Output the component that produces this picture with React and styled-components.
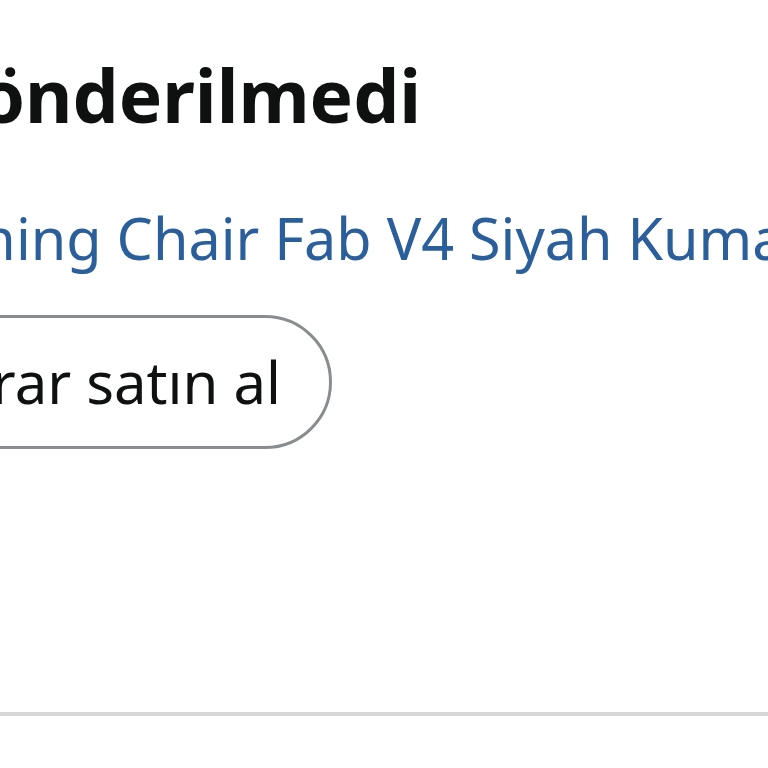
import React from "react";
import styled, { createGlobalStyle } from "styled-components";

const Global = createGlobalStyle`
  html, body { margin: 0; padding: 0; background: #ffffff; }
  body { font-family: "Noto Sans", "Open Sans", Arial, sans-serif; color: #0f1111; }
`;

const Page = styled.div`
  width: 768px;
  height: 768px;
  overflow: hidden;
  background: #ffffff;
  display: flex;
  flex-direction: column;
`;

const Section = styled.section`
  display: flex;
  flex-direction: column;
  align-items: flex-start;
  padding-top: 58px;
`;

const Status = styled.h2`
  margin: 0 0 0 ${(p) => p.$lead}px;
  font-size: 73px;
  line-height: 1;
  font-weight: 700;
  color: #0f1111;
  white-space: nowrap;
`;

const ProductLink = styled.a`
  display: block;
  margin: 79px 0 0 ${(p) => p.$lead}px;
  font-size: 57.5px;
  line-height: 1;
  color: #2a5f9c;
  text-decoration: none;
  white-space: nowrap;
`;

const PillButton = styled.button`
  margin: 47px 0 0 ${(p) => p.$lead}px;
  height: 134px;
  padding: 0 48px;
  border: 3px solid #8a8d8f;
  border-radius: 67px;
  background: #ffffff;
  font-family: inherit;
  font-size: 58px;
  line-height: 1;
  color: #0f1111;
  white-space: nowrap;
  display: flex;
  align-items: center;
`;

const Divider = styled.hr`
  margin: 263px 0 0 0;
  border: none;
  height: 4px;
  background: #d5d7d7;
  width: 100%;
`;

export default function App() {
  return (
    <>
      <Global />
      <Page>
        <Section>
          <Status $lead={-316}>Henüz gönderilmedi</Status>
          <ProductLink href="#" $lead={-112}>Gaming Chair Fab V4 Siyah Kumaş</ProductLink>
          <PillButton $lead={-151}>Tekrar satın al</PillButton>
        </Section>
        <Divider />
      </Page>
    </>
  );
}
